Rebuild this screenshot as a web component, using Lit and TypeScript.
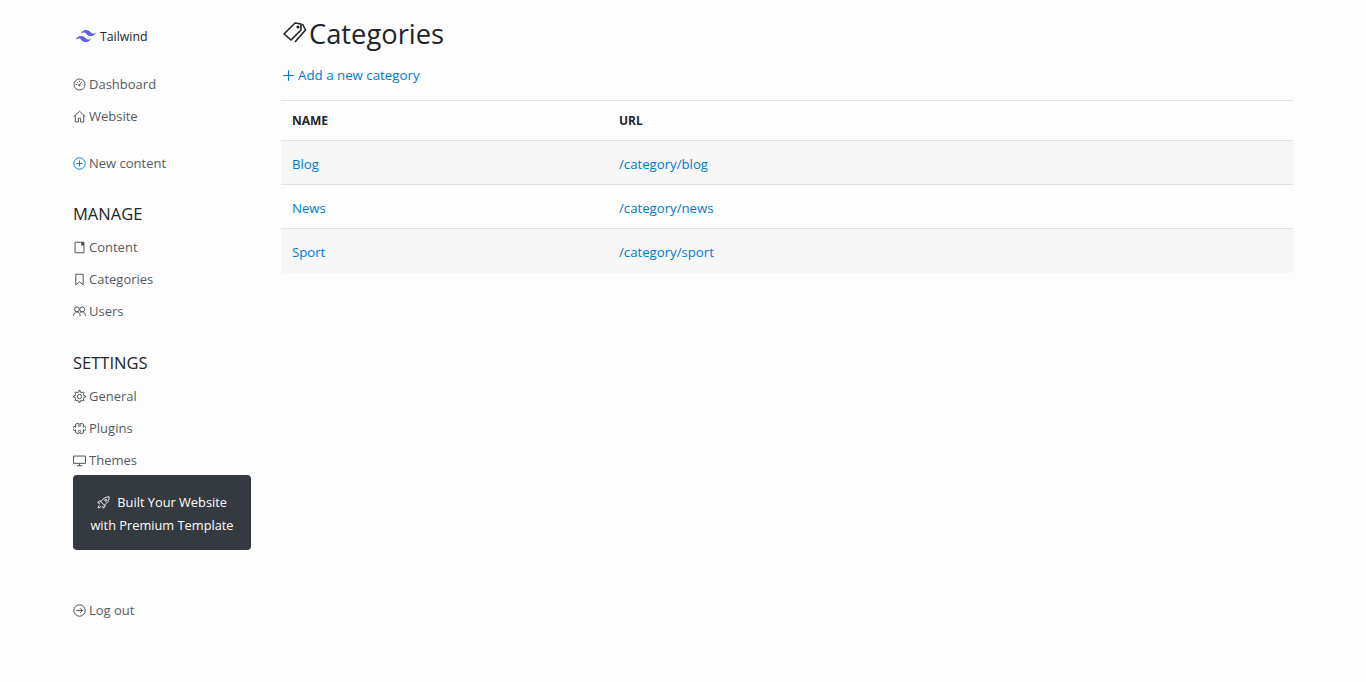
import { LitElement, html, css, svg } from "lit";
import { customElement } from "lit/decorators.js";

function gearPath() {
  const pts: string[] = [];
  const teeth = 8;
  for (let i = 0; i < teeth; i++) {
    const a = (i / teeth) * Math.PI * 2;
    const step = (Math.PI * 2) / teeth;
    const ring: [number, number][] = [
      [5.4, a - step * 0.5],
      [5.4, a - step * 0.24],
      [7.3, a - step * 0.14],
      [7.3, a + step * 0.14],
      [5.4, a + step * 0.24],
    ];
    for (const [r, t] of ring) {
      pts.push(`${(8 + r * Math.cos(t)).toFixed(2)} ${(8 + r * Math.sin(t)).toFixed(2)}`);
    }
  }
  return `M${pts.join("L")}z`;
}

const icons: Record<string, any> = {
  dash: svg`<circle cx="8" cy="8" r="6.8"/><path d="M8 3.400v1.500M3.400 8h1.500M4.800 4.800l1 1M7.300 9l3.700-4.300"/><circle cx="7.700" cy="8.800" r=".9"/>`,
  home: svg`<path d="M.8 8.300 8 1.500l7.200 6.800M2.800 6.500V14.700h3.800v-4.500h2.800v4.500h3.800V6.500"/>`,
  plus: svg`<circle cx="8" cy="8" r="7"/><path d="M8 4.300v7.400M4.300 8h7.400"/>`,
  content: svg`<path d="M13.500 1.500H2.500v13h11z"/><path class="solid" d="M10 1.500h3.500V5.500H10z"/>`,
  bookmark: svg`<path d="M3.500 1.500h9v13L8 11l-4.500 3.500z"/>`,
  users: svg`<circle cx="4.800" cy="5.400" r="3"/><circle cx="11.400" cy="5.400" r="3"/><path d="M.6 13.500c0-2.800 1.800-5 4.200-5s4 2.200 4 5M8.600 9c.8-.4 1.700-.6 2.600-.6 2.500 0 4.200 2.200 4.200 5.100"/>`,
  gear: svg`<circle cx="8" cy="8" r="2.600"/><path d="${gearPath()}"/>`,
  puzzle: svg`<path d="M3.112 3.645A1.500 1.500 0 0 1 4.605 2H7a.5.5 0 0 1 .5.5v.382c0 .696-.497 1.182-.872 1.469-.2.150-.128.300-.128.649C6.500 4.900 7.100 5 8 5s1.500-.1 1.500-.5c0-.349.072-.499-.128-.649-.375-.287-.872-.773-.872-1.469V2.500A.5.5 0 0 1 9 2h2.395a1.500 1.500 0 0 1 1.493 1.645L12.645 6.500h.237c.195 0 .42-.147.675-.48.21-.274.528-.52.943-.52.568 0 .947.447 1.154.862C15.877 6.807 16 7.387 16 8s-.123 1.193-.346 1.638c-.207.415-.586.862-1.154.862-.415 0-.733-.246-.943-.52-.255-.333-.48-.48-.675-.48h-.237l.243 2.855A1.500 1.500 0 0 1 11.395 14H9a.5.5 0 0 1-.5-.5v-.382c0-.696.497-1.182.872-1.469.2-.150.128-.300.128-.649 0-.4-.6-.5-1.500-.5s-1.500.1-1.500.5c0 .349-.072.499.128.649.375.287.872.773.872 1.469v.382a.5.5 0 0 1-.5.5H4.605a1.500 1.500 0 0 1-1.493-1.645L3.356 9.500h-.238c-.195 0-.42.147-.675.48-.21.274-.528.52-.943.52-.568 0-.947-.447-1.154-.862C.123 9.193 0 8.613 0 8s.123-1.193.346-1.638C.553 5.947.932 5.500 1.500 5.500c.415 0 .733.246.943.52.255.333.48.48.675.48h.238l-.244-2.855z"/>`,
  display: svg`<path d="M.7 2.500h14.600v9H.7zM4.800 14.500h6.400M8 11.500v3"/>`,
  logout: svg`<circle cx="8" cy="8" r="7"/><path d="M4.200 8h7.300M8.500 5l3 3-3 3"/>`,
  rocket: svg`<path d="M15 1c-3.200 0-5.800 1.100-7.800 3.100L4.700 6.900l4.400 4.400 2.800-2.500C13.900 6.800 15 4.200 15 1z"/><path d="M5.300 6.300H2.600L1 8.400l2.800.6M9.700 10.700v2.700L7.600 15 7 12.200M3.400 11c-1 .5-1.700 1.700-2.100 3.700 2-.4 3.200-1.100 3.700-2.100"/><circle cx="10.800" cy="5.200" r="1.200"/>`,
};

function icon(name: string, cls = "") {
  return html`<svg class="ic ${cls}" viewBox="0 0 16 16" aria-hidden="true">${icons[name]}</svg>`;
}

@customElement("app-root")
export class AppRoot extends LitElement {
  static styles = css`
    :host { display: block; min-height: 682px; background: #fdfdfd; font-family: "Open Sans", "Noto Sans", sans-serif; font-size: 13px; color: #212529; }
    .page { display: flex; height: 682px; box-sizing: border-box; padding-left: 73px; }
    aside { width: 178px; flex: none; display: flex; flex-direction: column; }
    .brand { display: flex; align-items: center; height: 20px; margin-top: 26px; padding-left: 3px; gap: 4px; font-size: 12.300px; color: #212529; }
    .brand svg { width: 20px; height: 12px; }
    .item { display: flex; align-items: center; height: 32px; gap: 3px; color: #555b61; white-space: nowrap; }
    .ic { width: 13px; height: 13px; flex: none; fill: none; stroke: #454a4f; stroke-width: 1.150; }
    .ic .solid { fill: #454a4f; stroke: none; }
    .ic.blue { stroke: #007bce; }
    .nav1 { margin-top: 22px; }
    .new { margin-top: 15px; }
    h6 { margin: 0; font-weight: 400; font-size: 16.500px; color: #212529; height: 24px; line-height: 24px; }
    .m { margin-top: 23px; margin-bottom: 5px; }
    .s { margin-top: 24px; margin-bottom: 5px; }
    .promo { margin-top: -1px; width: 178px; height: 75px; flex: none; box-sizing: border-box; background: #343a40; border-radius: 4px; color: #fff; text-align: center; font-size: 12.800px; line-height: 23px; padding-top: 16px; }
    .promo .ic { width: 13px; height: 13px; vertical-align: -2px; margin-right: 4px; stroke: #fff; }
    .out { margin-top: 44px; }
    main { margin-left: 30px; width: 1012px; flex: none; }
    h1 { margin: 0; height: 48px; margin-top: 10px; padding: 0 0 2px 2px; box-sizing: border-box; display: flex; align-items: center; gap: 2px; font-weight: 400; font-size: 27.300px; color: #212529; }
    .tag { width: 24px; height: 24px; flex: none; fill: none; stroke: #212529; stroke-width: 1.600; stroke-linejoin: round; }
    .add { display: flex; align-items: center; gap: 3px; margin-top: 7px; height: 20px; font-size: 13.300px; color: #007bce; padding-left: 1px; }
    .add .ic { width: 13px; height: 13px; stroke: #007bce; stroke-width: 1.300; }
    .table { margin-top: 15px; border-top: 1px solid #dee2e6; }
    .row { display: grid; grid-template-columns: 327px 1fr; height: 43px; box-sizing: content-box; align-items: center; padding-left: 11px; border-top: 1px solid #dee2e6; font-size: 13.200px; color: #007bce; }
    .row span { padding-top: 2px; }
    .row.head { height: 39px; border-top: 0; color: #212529; font-weight: 700; font-size: 12px; }
    .row.head span { padding-top: 0; }
    .row.odd { background: #f7f7f7; }
    .row.last { height: 44px; }
  `;

  item(ic: string, label: string) {
    return html`<div class="item">${icon(ic, ic === "plus" ? "blue" : "")}<span>${label}</span></div>`;
  }

  render() {
    return html`<div class="page">
      <aside>
        <div class="brand">
          <svg viewBox="0 0 54 32" aria-hidden="true"><path fill="#5a5fe6" d="M27 0C19.800 0 15.300 3.600 13.500 10.800c2.700-3.600 5.850-4.950 9.450-4.050 2.054.513 3.522 2.004 5.147 3.653C30.744 13.090 33.808 16.200 40.500 16.200c7.200 0 11.700-3.600 13.500-10.800-2.700 3.600-5.850 4.950-9.450 4.050-2.054-.513-3.522-2.004-5.147-3.653C36.756 3.110 33.692 0 27 0zM13.500 16.200C6.300 16.200 1.800 19.800 0 27c2.700-3.600 5.850-4.950 9.450-4.050 2.054.514 3.522 2.004 5.147 3.653C17.244 29.290 20.308 32.400 27 32.400c7.200 0 11.700-3.600 13.500-10.800-2.700 3.600-5.850 4.950-9.450 4.050-2.054-.513-3.522-2.004-5.147-3.653C23.256 19.310 20.192 16.200 13.500 16.200z"/></svg>
          <span>Tailwind</span>
        </div>
        <div class="nav1">${this.item("dash", "Dashboard")}${this.item("home", "Website")}</div>
        <div class="new">${this.item("plus", "New content")}</div>
        <h6 class="m">MANAGE</h6>
        ${this.item("content", "Content")}${this.item("bookmark", "Categories")}${this.item("users", "Users")}
        <h6 class="s">SETTINGS</h6>
        ${this.item("gear", "General")}${this.item("puzzle", "Plugins")}${this.item("display", "Themes")}
        <div class="promo">${icon("rocket")} Built Your Website<br />with Premium Template</div>
        <div class="out">${this.item("logout", "Log out")}</div>
      </aside>
      <main>
        <h1><svg class="tag" viewBox="0 0 24 24" aria-hidden="true"><path d="M1 13 12 2l6 1v6L8 19z"/><path d="M19.500 3l3 6L12 21"/><circle cx="15" cy="6" r=".8"/></svg><span>Categories</span></h1>
        <div class="add"><svg class="ic" viewBox="0 0 16 16" aria-hidden="true"><path d="M8 1.500v13M1.500 8h13"/></svg><span>Add a new category</span></div>
        <div class="table">
          <div class="row head"><span>NAME</span><span>URL</span></div>
          <div class="row odd"><span>Blog</span><span>/category/blog</span></div>
          <div class="row"><span>News</span><span>/category/news</span></div>
          <div class="row odd last"><span>Sport</span><span>/category/sport</span></div>
        </div>
      </main>
    </div>`;
  }
}
